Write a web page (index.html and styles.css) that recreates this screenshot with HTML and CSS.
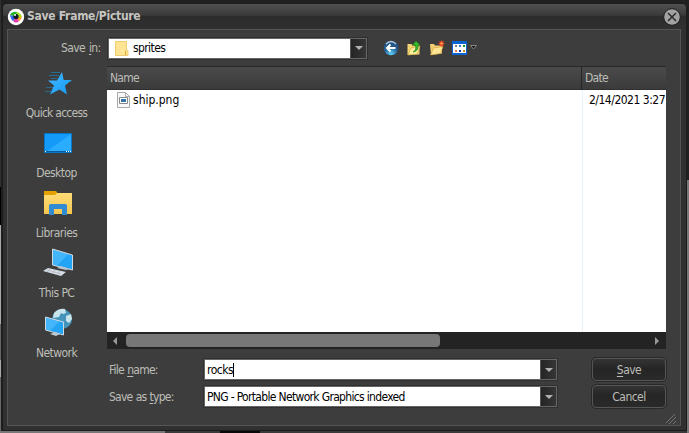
FILE: index.html
```html
<!DOCTYPE html>
<html lang="en">
<head>
<meta charset="utf-8">
<title>Save Frame/Picture</title>
<link rel="stylesheet" href="styles.css">
</head>
<body>
<div class="window">
  <header class="titlebar">
    <svg class="logo" width="18" height="18" viewBox="0 0 18 18"><circle cx="9" cy="9" r="8.2" fill="#fff"/><path d="M9 9L3 7Q5 3 10 4Z" fill="#23b52b"/><path d="M9 9L10 4Q14 5 15 9Z" fill="#a8df27"/><path d="M9 9L15 9Q13 13 12 13Z" fill="#f2a51d"/><path d="M9 9L12 13Q9 16 6 13Z" fill="#e43ba4"/><path d="M9 9L6 13Q4 12 3 7Z" fill="#3565ed"/><circle cx="9" cy="8.5" r="2.6" fill="#101820"/><circle cx="8" cy="7" r="1" fill="#fff"/></svg>
    <h1>Save Frame/Picture</h1>
    <svg class="close" width="18" height="18" viewBox="0 0 18 18"><circle cx="9" cy="9" r="8.3" fill="#a2a2a2" stroke="#1e1e1e"/><path d="M5 5l8 8M13 5l-8 8" stroke="#303030" stroke-width="1.7"/></svg>
  </header>
  <main class="panel">
    <div class="toolbar">
      <label class="save-in">Save <u>i</u>n:</label>
      <div class="combo location"><div class="value"><svg width="14" height="17" viewBox="0 0 14 17"><path d="M.5 1.5h11v9h1.5v5H.5z" fill="#ffe494" stroke="#efcd6e"/><path d="M10.5 11v4" stroke="#d9ae3e"/></svg><span>sprites</span></div><i class="arrow"></i></div>
      <nav class="tools">
        <svg width="16" height="16" viewBox="0 0 16 16"><defs><radialGradient id="orb" cy=".9"><stop stop-color="#5ed2ff"/><stop offset="1" stop-color="#24578c"/></radialGradient></defs><circle cx="8" cy="8" r="7.3" fill="url(#orb)"/><path d="M3 4Q8-1 13 4" fill="none" stroke="#b5c8d8" stroke-width="1.2"/><path d="M12.5 8H4M7.5 4.5L4 8l3.5 3.5" fill="none" stroke="#fff" stroke-width="2"/></svg>
        <svg width="16" height="16" viewBox="0 0 16 16"><path d="M1.500 4h4l1 1.500h7v9l-12 .5z" fill="#f4d574"/><path d="M2 15l3-7 9-2-2.500 8z" fill="#ffef9d" stroke="#c99b30" stroke-width=".6"/><path d="M7 12q4-2 2.300-7H6.500l3.500-4L14 5h-2q1 6-5 7z" fill="#35bc2b" stroke="#127b16" stroke-width=".6"/></svg>
        <svg width="16" height="16" viewBox="0 0 16 16"><path d="M1 4h4l1 1.500h7v8L2 15z" fill="#f2cf70"/><path d="M1.500 15l3-7 9.500-1.500-2.500 7z" fill="#ffe795" stroke="#cc9a37" stroke-width=".6"/><path d="M12.500.5v6M9.500 3.500h6M10.500 1.500l4 4M14.500 1.500l-4 4" stroke="#ed4c22" stroke-width="1.2"/><circle cx="12.500" cy="3.500" r="1" fill="#ffbb65"/></svg>
        <svg class="views" width="27" height="16" viewBox="0 0 27 16"><path d="M0 1h15v14H0z" fill="#0863d0"/><path d="M1 4h13v9H1z" fill="#fff"/><path d="M3 5h2v2H3z" fill="#8a8190"/><path d="M7 5h2v2H7z" fill="#3775df"/><path d="M11 5h2v2h-2z" fill="#169527"/><path d="M3 10h2v2H3z" fill="#ef7356"/><path d="M7 10h2v2H7z" fill="#153aa6"/><path d="M11 10h2v2h-2z" fill="#c78b12"/><path d="M18.500 5.500h6l-3 3.500z" fill="#161616" stroke="#858585"/></svg>
      </nav>
    </div>
    <div class="body">
      <aside class="places">
        <div class="place"><svg width="30" height="28" viewBox="0 0 30 28"><defs><linearGradient id="star" x2="1" y2="1"><stop stop-color="#43b9ff"/><stop offset="1" stop-color="#159af5"/></linearGradient></defs><path d="M19 4l1.700 8H29l-7 5.500 2 9-7.500-5L7 26.500l4-9-6-5h9z" fill="url(#star)"/><path d="M8 4.500h9M6 7.500h10M8 10.500h6M3 19.500h7M2 23.500h7" stroke="#227fb9" stroke-width=".7"/></svg><span class="quick">Quick access</span></div>
        <div class="place"><svg width="30" height="28" viewBox="0 0 30 28"><defs><linearGradient id="desk" x2="1" y2="1"><stop offset=".5" stop-color="#149bfa"/><stop offset=".52" stop-color="#2badff"/></linearGradient></defs><path d="M1.500 5.500h27v19h-27z" fill="url(#desk)" stroke="#0877c9"/><path d="M2 23.500h26" stroke="#075b9e"/><path d="M2 23.500h1M23 23.500h1M25 23.500h1M27 23.500h1" stroke="#fff"/></svg><span>Desktop</span></div>
        <div class="place"><svg width="30" height="28" viewBox="0 0 30 28"><defs><linearGradient id="folder" x2="0" y2="1"><stop stop-color="#ffdc77"/><stop offset="1" stop-color="#f5c64f"/></linearGradient></defs><path d="M1 3h12l1.500 2L12 9H1z" fill="#e5a000"/><path d="M1 7h11l2-2h15v21H1z" fill="url(#folder)"/><path d="M6 27V17l1.500-1h15l1.500 1v10h-5v-6h-8v6z" fill="#318bd2"/></svg><span>Libraries</span></div>
        <div class="place"><svg width="30" height="28" viewBox="0 0 30 28"><defs><linearGradient id="screen" x2="1" y2="1"><stop offset=".5" stop-color="#43b6fa"/><stop offset=".52" stop-color="#24a4f5"/></linearGradient></defs><path d="M9.500 1l20 6v15l-20-5z" fill="url(#screen)" stroke="#d1d9e0"/><path d="M14 20l4-2 9 3-4 1z" fill="#b9c4ce"/><path d="M0 23l5-3 18 4-5 4z" fill="#d7dde3"/><path d="M4 22l14 4M7 21l-3 3M12 22l-3 4M17 23l-3 4" stroke="#98a3ae" stroke-width=".5"/></svg><span>This PC</span></div>
        <div class="place"><svg width="30" height="28" viewBox="0 0 30 28"><circle cx="19" cy="11" r="10" fill="#4595bb"/><path d="M11 5q5-5 11-4l1 4-3 1-2-1-2 4-6 1zM23 8l5-2 1 5-3 4-3-2z" fill="#c9e5ec"/><path d="M2.500 9l18 5v13l-18-5z" fill="url(#screen)" stroke="#d1d9e0"/><path d="M7 26l5-2 5 2-4 2z" fill="#bec8d1"/></svg><span>Network</span></div>
      </aside>
      <section class="files">
        <div class="list-head"><span>Name</span><span>Date</span></div>
        <div class="list">
          <div class="name-col"><svg width="13" height="16" viewBox="0 0 13 16"><path d="M.5.500h8l4 4v11H.5z" fill="#f8f8f8" stroke="#a8a8a8"/><path d="M8.500.500v4h4" fill="none" stroke="#aaa"/><path d="M2.500 5.500h8v6h-8z" fill="#fff" stroke="#888"/><path d="M4 7h5v3H4z" fill="#3474ad"/></svg><span>ship.png</span></div>
          <div class="date-col"><span>2/14/2021 3:27</span></div>
        </div>
        <div class="scrollbar"><i class="left"></i><div class="thumb"></div><i class="right"></i></div>
      </section>
    </div>
    <div class="form">
      <label class="file-label">File <u>n</u>ame:</label>
      <div class="combo"><div class="value"><span class="typed">rocks</span></div><i class="arrow"></i></div>
      <button><span class="save-text"><u>S</u>ave</span></button>
      <label class="type-label">Save as <u>t</u>ype:</label>
      <div class="combo"><div class="value"><span class="type">PNG - Portable Network Graphics indexed</span></div><i class="arrow"></i></div>
      <button><span>Cancel</span></button>
    </div>
    <svg class="grip" width="10" height="10" viewBox="0 0 10 10"><path d="M0 9l9-9M3 10l7-7M7 10l3-3" stroke="#737373"/></svg>
  </main>
</div>
</body>
</html>
```
FILE: styles.css
```css
* { box-sizing: border-box; }
body {
  margin: 0;
  width: 689px;
  height: 433px;
  padding: 3px 2px 2px;
  overflow: hidden;
  background: linear-gradient(#090909, #090909) 220px 431px / 40px 2px no-repeat,
    linear-gradient(#777, #777) 0 431px / 165px 2px no-repeat,
    linear-gradient(#3a3a3a, #3a3a3a) 0 431px / 687px 2px no-repeat,
    linear-gradient(#303030 0 187px, #000 187px 225px, #aaa 225px 324px, #656565 324px 360px, #aaa 360px 377px, #666 377px) 0 0 / 1px 433px no-repeat,
    linear-gradient(#202020 180px, #777 180px) 687px 0 / 2px 433px no-repeat,
    #202020;
  font: 12px/14px "DejaVu Sans Condensed", "DejaVu Sans", sans-serif;
  color: #bdbdb8;
}
svg { display: block; flex: none; }
.window { width: 685px; height: 428px; padding: 0 5px 5px; background: #303030; border: 1px solid #1c1c1c; border-radius: 5px 5px 0 0; }
.titlebar { display: flex; align-items: center; height: 25px; margin: 0 -5px; padding: 0 5px 0 4px; background: linear-gradient(#505050, #3a3a3a 45%, #2c2c2c 50%, #303030); border-radius: 4px 4px 0 0; }
h1 { flex: 1; margin: -2px 0 0 2px; font-size: 12px; line-height: 16px; letter-spacing: -.28px; color: #c4c4c0; }
.panel { position: relative; width: 674px; height: 397px; margin-left: -1px; padding: 7px 15px 0 0; background: #3d3d3d; border: 1px solid #555; }
.toolbar { display: flex; height: 22px; align-items: center; }
.save-in { width: 100px; padding-left: 53px; letter-spacing: -.6px; word-spacing: 1px; }
.combo { display: flex; height: 21px; background: #fff; border: 1px solid #666; outline: 1px solid #303030; color: #000; }
.value { flex: 1; display: flex; align-items: center; padding-left: 2px; white-space: nowrap; }
.location { width: 259px; }
.location .value { padding-left: 6px; gap: 4px; letter-spacing: -.9px; }
.location .value { letter-spacing: -.6px; }
.arrow { display: grid; place-items: center; width: 16px; background: linear-gradient(90deg, #252525, #363636); border-left: 1px solid #555; }
.arrow::before { content: ""; border: 4px solid transparent; border-top-color: #b2b2b2; border-bottom: 0; }
.tools { display: flex; gap: 7px; margin-left: 16px; }
.body { display: grid; grid-template-columns: 99px 559px; height: 283px; margin-top: 7px; }
.places { display: grid; grid-template-rows: repeat(5, 60px); padding-top: 2px; }
.place { display: grid; grid-template-rows: 28px 25px; justify-items: center; align-items: end; letter-spacing: -.55px; padding-right: 2px; }
.place span { white-space: nowrap; line-height: 16px; }
.place svg { margin-left: 2px; }
.place .quick { letter-spacing: -.75px; }
.list-head { display: grid; grid-template-columns: 475px 84px; height: 24px; border-top: 1px solid #282828; border-bottom: 1px solid #303030; background: linear-gradient(#4a4a4a, #3b3b3b); line-height: 23px; }
.list-head span { padding-left: 3px; letter-spacing: -.7px; }
.list-head span:first-child { border-right: 1px solid #272727; }
.list { display: grid; grid-template-columns: 476px 83px; height: 242px; background: #fff; color: #000; }
.name-col { display: flex; align-items: flex-start; gap: 3px; padding: 2px 0 0 10px; border-right: 1px solid #e6f1fb; }
.name-col span { padding-top: 1px; letter-spacing: 0; }
.date-col { padding: 3px 0 0 6px; overflow: hidden; white-space: nowrap; letter-spacing: -.5px; }
.scrollbar { display: flex; align-items: center; height: 17px; padding: 0 7px 0 6px; background: #232323; }
.left, .right { border: 4px solid transparent; }
.left { border-right-color: #999; border-left: 0; }
.right { border-left-color: #999; border-right: 0; margin-left: auto; }
.thumb { width: 314px; height: 13px; margin-left: 9px; border-radius: 4px; background: #777; }
.form { display: grid; grid-template-columns: 96px 353px 75px; grid-template-rows: 21px 21px; row-gap: 6px; margin: 10px 0 0 100px; align-items: center; }
.form label { padding-left: 1px; letter-spacing: -.75px; white-space: nowrap; word-spacing: .5px; }
.form button { justify-self: end; margin-right: -34px; }
.type { letter-spacing: -.67px; }
.typed { letter-spacing: -.5px; border-right: 1px solid #000; }
button { width: 74px; height: 23px; padding: 0; border: 1px solid #565656; outline: 1px solid #292929; border-radius: 4px; background: linear-gradient(#343434, #252525 45%, #2a2a2a); color: #bdbdb8; font: inherit; letter-spacing: -.55px; }
u { text-underline-offset: 2px; text-decoration-thickness: 1px; }
.grip { position: absolute; right: 4px; bottom: 1px; }
```
